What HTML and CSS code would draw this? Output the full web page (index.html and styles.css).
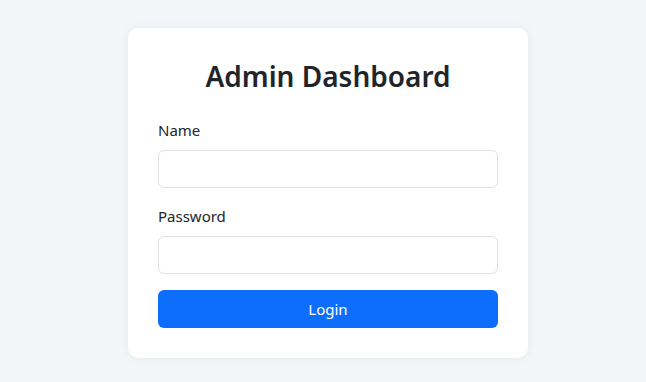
FILE: index.html
```html
<!DOCTYPE html>
<html lang="en">
<head>
<meta charset="UTF-8">
<meta name="viewport" content="width=device-width, initial-scale=1.0">
<title>Admin Dashboard</title>
<link rel="stylesheet" href="styles.css">
</head>
<body>

<div class="login-card">
  <h1>Admin Dashboard</h1>
  <form>
    <div class="field">
      <label for="name">Name</label>
      <input type="text" id="name">
    </div>
    <div class="field">
      <label for="password">Password</label>
      <input type="password" id="password">
    </div>
    <button type="submit" class="btn">Login</button>
  </form>
</div>

</body>
</html>
```

FILE: styles.css
```css
body {
  font-family: "Noto Sans", "Open Sans", sans-serif;
  margin: 0;
  padding: 28px 0 28px 10px;
  background-color: #f4f5f9;
  color: #212529;
}
.login-card {
  width: 400px;
  box-sizing: border-box;
  margin: 0 auto;
  padding: 30px;
  background-color: #fff;
  border-radius: 10px;
  box-shadow: 0 0 10px rgba(0, 0, 0, 0.06);
}
h1 {
  margin: 0 0 24px;
  font-size: 28px;
  line-height: 36px;
  font-weight: 600;
  text-align: center;
}
.field {
  margin-bottom: 16px;
}
.field label {
  display: block;
  margin-bottom: 8px;
  font-size: 15px;
  line-height: 24px;
}
.field input {
  display: block;
  width: 100%;
  height: 38px;
  box-sizing: border-box;
  padding: 6px 12px;
  border: 1px solid #dee2e6;
  border-radius: 6px;
  font: inherit;
}
.btn {
  display: block;
  width: 100%;
  height: 38px;
  padding: 0;
  background-color: #0d6efd;
  color: white;
  border: none;
  border-radius: 6px;
  font-family: inherit;
  font-size: 15px;
  cursor: pointer;
}
.btn:hover {
  background-color: #0b5ed7;
}
```
